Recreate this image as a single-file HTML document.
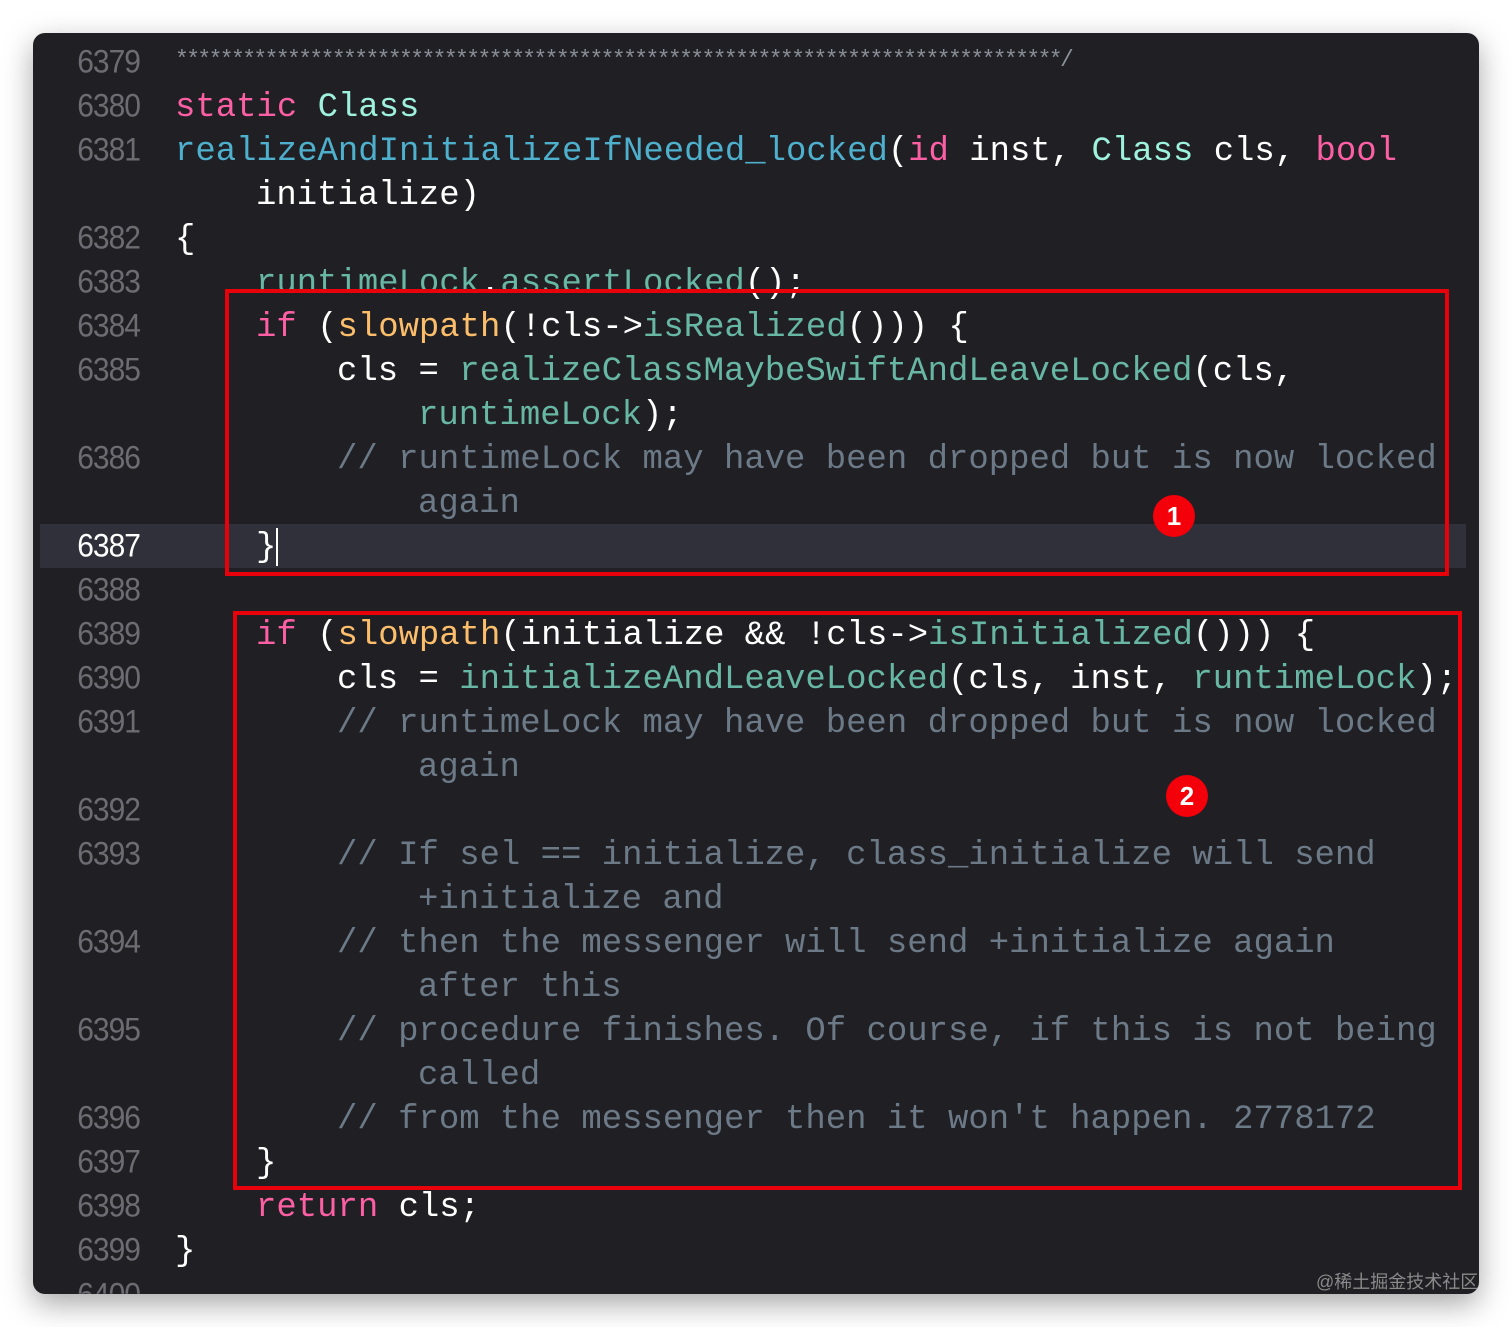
<!DOCTYPE html>
<html><head><meta charset="utf-8"><style>
html,body{margin:0;padding:0;background:#fff;}
body{width:1512px;height:1327px;position:relative;overflow:hidden;}
.win{position:absolute;left:33px;top:33px;width:1446px;height:1261px;background:#1f1f24;border-radius:12px;box-shadow:0 10px 30px rgba(0,0,0,0.35);overflow:hidden;}
.cur{position:absolute;left:7px;top:491px;width:1426px;height:44px;background:#2f3039;}
.ln{position:absolute;left:60px;width:80px;text-align:right;font-family:"Liberation Sans",sans-serif;font-size:30px;color:#6c6c72;line-height:44px;height:44px;letter-spacing:-1px;transform:scaleY(1.08);transform-origin:right center;}
.c{position:absolute;white-space:pre;font-family:"Liberation Mono",monospace;font-size:33.95px;line-height:44px;height:44px;color:#fff;}
.k{color:#fc5fa3;}
.t{color:#9ef1dd;}
.f{color:#4eb0cc;}
.g{color:#67b7a4;}
.cm{color:#6c7986;}
.box{position:absolute;border:4px solid #e8000b;box-sizing:border-box;}
.badge{position:absolute;width:42px;height:42px;border-radius:50%;background:#f4000a;color:#fff;font-family:"Liberation Sans",sans-serif;font-size:26px;font-weight:bold;text-align:center;line-height:42px;}
.wm{position:absolute;left:1316px;top:1268px;font-family:"Liberation Sans","Noto Sans CJK SC",sans-serif;font-size:18px;color:#8a8a8a;}
</style></head><body>
<div class="win">
<div class="cur"></div>
</div>
<div class="ln" style="top:41px">6379</div>
<div class="ln" style="top:85px">6380</div>
<div class="ln" style="top:129px">6381</div>
<div class="ln" style="top:217px">6382</div>
<div class="ln" style="top:261px">6383</div>
<div class="ln" style="top:305px">6384</div>
<div class="ln" style="top:349px">6385</div>
<div class="ln" style="top:437px">6386</div>
<div class="ln" style="top:525px;color:#fff">6387</div>
<div class="ln" style="top:569px">6388</div>
<div class="ln" style="top:613px">6389</div>
<div class="ln" style="top:657px">6390</div>
<div class="ln" style="top:701px">6391</div>
<div class="ln" style="top:789px">6392</div>
<div class="ln" style="top:833px">6393</div>
<div class="ln" style="top:921px">6394</div>
<div class="ln" style="top:1009px">6395</div>
<div class="ln" style="top:1097px">6396</div>
<div class="ln" style="top:1141px">6397</div>
<div class="ln" style="top:1185px">6398</div>
<div class="ln" style="top:1229px">6399</div>
<div class="ln" style="top:1273px;height:20px;overflow:hidden">6400</div>

<div class="c cm" style="left:175px;top:38px;font-size:23px;letter-spacing:-2.6px;color:#8a8f98">*******************************************************************************/</div>
<div class="c" style="left:175px;top:86px"><span class="k">static</span> <span class="t">Class</span></div>
<div class="c" style="left:175px;top:130px"><span class="f">realizeAndInitializeIfNeeded_locked</span>(<span class="k">id</span> inst, <span class="t">Class</span> cls, <span class="k">bool</span></div>
<div class="c" style="left:256px;top:174px">initialize)</div>
<div class="c" style="left:175px;top:218px">{</div>
<div class="c" style="left:256px;top:262px"><span class="g">runtimeLock</span>.<span class="g">assertLocked</span>();</div>
<div class="c" style="left:256px;top:306px"><span class="k">if</span> (<span style="color:#fdbe6c">slowpath</span>(!cls-&gt;<span class="g">isRealized</span>())) {</div>
<div class="c" style="left:337px;top:350px">cls = <span class="g">realizeClassMaybeSwiftAndLeaveLocked</span>(cls,</div>
<div class="c" style="left:418px;top:394px"><span class="g">runtimeLock</span>);</div>
<div class="c cm" style="left:337px;top:438px">// runtimeLock may have been dropped but is now locked</div>
<div class="c cm" style="left:418px;top:482px">again</div>
<div class="c" style="left:256px;top:526px">}<span style="display:inline-block;width:2px;height:38px;background:#fff;vertical-align:middle"></span></div>
<div class="c" style="left:256px;top:614px"><span class="k">if</span> (<span style="color:#fdbe6c">slowpath</span>(initialize &amp;&amp; !cls-&gt;<span class="g">isInitialized</span>())) {</div>
<div class="c" style="left:337px;top:658px">cls = <span class="g">initializeAndLeaveLocked</span>(cls, inst, <span class="g">runtimeLock</span>);</div>
<div class="c cm" style="left:337px;top:702px">// runtimeLock may have been dropped but is now locked</div>
<div class="c cm" style="left:418px;top:746px">again</div>
<div class="c cm" style="left:337px;top:834px">// If sel == initialize, class_initialize will send</div>
<div class="c cm" style="left:418px;top:878px">+initialize and</div>
<div class="c cm" style="left:337px;top:922px">// then the messenger will send +initialize again</div>
<div class="c cm" style="left:418px;top:966px">after this</div>
<div class="c cm" style="left:337px;top:1010px">// procedure finishes. Of course, if this is not being</div>
<div class="c cm" style="left:418px;top:1054px">called</div>
<div class="c cm" style="left:337px;top:1098px">// from the messenger then it won't happen. 2778172</div>
<div class="c" style="left:256px;top:1142px">}</div>
<div class="c" style="left:256px;top:1186px"><span class="k">return</span> cls;</div>
<div class="c" style="left:175px;top:1230px">}</div>

<div class="box" style="left:225px;top:289px;width:1224px;height:287px"></div>
<div class="box" style="left:233px;top:611px;width:1229px;height:579px"></div>
<div class="badge" style="left:1153px;top:495px">1</div>
<div class="badge" style="left:1166px;top:775px">2</div>
<div class="wm">@稀土掘金技术社区</div>
</body></html>
